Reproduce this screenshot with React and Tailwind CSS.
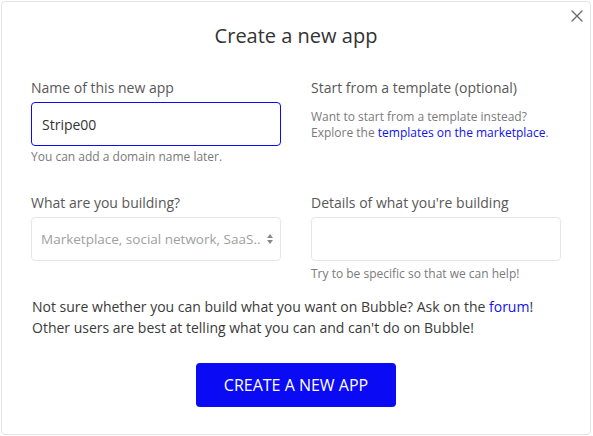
export default function App() {
  return (
    <div className="w-[593px] h-[436px] bg-white pt-px pl-px" style={{ fontFamily: '"Open Sans", "Noto Sans", sans-serif' }}>
      <div className="relative w-[590px] h-[434px] border border-[#e4e4e4] rounded-[4px] bg-white">
        <button className="absolute top-[6px] right-[5px] w-[16px] h-[16px] flex items-center justify-center text-[#6b6b6b]">
          <svg width="12" height="12" viewBox="0 0 12 12" fill="none" stroke="currentColor" strokeWidth="1.4" strokeLinecap="round">
            <path d="M1 1 L11 11 M11 1 L1 11" />
          </svg>
        </button>
        <h1 className="pt-[20px] text-center text-[20px] leading-[28px] text-[#333333] font-medium">Create a new app</h1>
        <div className="grid grid-cols-2 gap-x-[30px] px-[29px] mt-[28px]">
          <div className="flex flex-col">
            <label className="text-[14px] leading-[20px] text-[#585858]">Name of this new app</label>
            <div className="mt-[4px] h-[44px] border border-[#0a0af5] rounded-[4px] flex items-center px-[10px] text-[14px] text-[#333333]">Stripe00</div>
            <div className="mt-[3px] text-[12px] leading-[16px] text-[#7a7a7a]">You can add a domain name later.</div>
          </div>
          <div className="flex flex-col">
            <label className="text-[14px] leading-[20px] text-[#585858]">Start from a template (optional)</label>
            <p className="mt-[11px] text-[12px] leading-[16px] text-[#7a7a7a]">
              Want to start from a template instead?<br />
              Explore the <span className="text-[#1010f0]">templates on the marketplace</span>.
            </p>
          </div>
          <div className="flex flex-col mt-[28px]">
            <label className="text-[14px] leading-[20px] text-[#585858]">What are you building?</label>
            <div className="mt-[4px] h-[44px] border border-[#e6e6e6] rounded-[4px] flex items-center pl-[9px] pr-[6px] text-[13.5px] text-[#a0a0a0]">
              <span className="flex-1 whitespace-nowrap">Marketplace, social network, SaaS..</span>
              <svg width="8" height="12" viewBox="0 0 8 12" className="ml-[2px] text-[#888888]" fill="currentColor">
                <path d="M4 1 L7 5 L1 5 Z" />
                <path d="M4 11 L7 7 L1 7 Z" />
              </svg>
            </div>
          </div>
          <div className="flex flex-col mt-[28px]">
            <label className="text-[14px] leading-[20px] text-[#585858]">Details of what you're building</label>
            <div className="mt-[4px] h-[44px] border border-[#e6e6e6] rounded-[4px]"></div>
            <div className="mt-[5px] text-[12px] leading-[16px] text-[#7a7a7a]">Try to be specific so that we can help!</div>
          </div>
        </div>
        <p className="mt-[14px] px-[30px] text-[14px] leading-[21px] text-[#3a3a3a]">
          Not sure whether you can build what you want on Bubble? Ask on the <span className="text-[#1010f0]">forum</span>!<br />
          Other users are best at telling what you can and can't do on Bubble!
        </p>
        <div className="flex justify-center mt-[25px]">
          <button className="w-[200px] h-[44px] rounded-[4px] bg-[#0a0af5] text-white text-[16px] flex items-center justify-center">CREATE A NEW APP</button>
        </div>
      </div>
    </div>
  );
}
